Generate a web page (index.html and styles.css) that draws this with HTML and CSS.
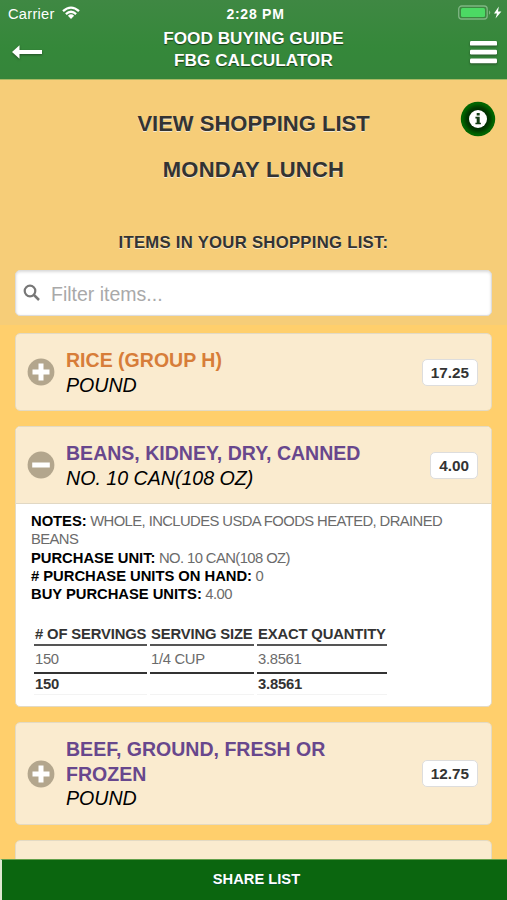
FILE: index.html
```html
<!DOCTYPE html>
<html lang="en">
<head>
<meta charset="utf-8">
<title>FBG Calculator</title>
<link rel="stylesheet" href="styles.css">
</head>
<body>
<div class="app">
  <header class="header">
    <div class="status">
      <div class="carrier"><span class="carrier-name">Carrier</span>
        <svg class="wifi" width="18" height="14" viewBox="0 0 18 14"><g fill="none" stroke="#fff" stroke-width="2.3"><path d="M1 5.2Q9-2 17 5.2"/><path d="M3.9 8.1Q9 3.4 14.1 8.1"/></g><path d="M5.9 9.7Q9 7 12.1 9.7L9 13z" fill="#fff"/></svg>
      </div>
      <span class="clock">2:28 PM</span>
      <svg class="battery" width="49" height="16" viewBox="0 0 49 16"><rect x="3.7" y="1" width="28.5" height="13" rx="3" fill="none" stroke="#7fb583" stroke-width="1.3"/><rect x="6" y="3" width="24" height="9" rx="1.5" fill="#4cd964"/><path d="M34 5.2q2.6 2.3 0 4.6z" fill="#7fb583"/><path d="M43.8 1.5L39 8.4h3l-1.5 5.2L46.4 6.4H43z" fill="#fff"/></svg>
    </div>
    <div class="nav">
      <svg class="back" width="34" height="20" viewBox="0 0 34 20"><path d="M1 9L8.5 2.3V7H31V11H8.5V15.7z" fill="#fff"/></svg>
      <h1 class="title">FOOD BUYING GUIDE<br>FBG CALCULATOR</h1>
      <svg class="menu" width="29" height="26" viewBox="0 0 29 26"><g fill="#fff"><rect x="1" y="1" width="27" height="4.6" rx="1.2"/><rect x="1" y="9.8" width="27" height="4.6" rx="1.2"/><rect x="1" y="18.6" width="27" height="4.6" rx="1.2"/></g></svg>
    </div>
  </header>
  <main class="content">
    <section class="intro">
      <h2 class="heading">VIEW SHOPPING LIST</h2>
      <svg class="info" width="36" height="36" viewBox="0 0 36 36"><defs><radialGradient id="ring"><stop offset=".5" stop-color="#002c00"/><stop offset=".68" stop-color="#003c00"/><stop offset=".9" stop-color="#006400"/></radialGradient></defs><circle cx="18" cy="18" r="17.2" fill="url(#ring)"/><circle cx="18" cy="18" r="9" fill="#fff"/><path d="M16.7 12h3v2.5h-3zM15.4 15.8h4.3v5.9h1.2v1.6h-5.5v-1.6h1.3v-4.2h-1.3z" fill="#123c12"/></svg>
      <h2 class="heading meal">MONDAY LUNCH</h2>
      <h3 class="subheading">ITEMS IN YOUR SHOPPING LIST:</h3>
      <div class="filter">
        <svg width="18" height="18" viewBox="0 0 18 18"><circle cx="7" cy="7" r="5.3" fill="none" stroke="#777" stroke-width="2.2"/><path d="M11 11l5 5" stroke="#777" stroke-width="2.5"/></svg>
        <span class="placeholder">Filter items...</span>
      </div>
    </section>
    <section class="list">
      <article class="card">
        <div class="row">
          <svg class="toggle" width="28" height="28" viewBox="0 0 28 28"><circle cx="14" cy="14" r="13.4" fill="#b3a68d"/><path d="M11.5 5.5h5v6h6v5h-6v6h-5v-6h-6v-5h6z" fill="#fff"/></svg>
          <div class="item"><div class="name orange">RICE (GROUP H)</div><div class="unit">POUND</div></div>
          <span class="count">17.25</span>
        </div>
      </article>
      <article class="card">
        <div class="row open">
          <svg class="toggle" width="28" height="28" viewBox="0 0 28 28"><circle cx="14" cy="14" r="13.4" fill="#b3a68d"/><path d="M5.2 11.5h17.6v5H5.2z" fill="#fff"/></svg>
          <div class="item"><div class="name">BEANS, KIDNEY, DRY, CANNED</div><div class="unit">NO. 10 CAN(108 OZ)</div></div>
          <span class="count">4.00</span>
        </div>
        <div class="details">
          <p><b>NOTES:</b> WHOLE, INCLUDES USDA FOODS HEATED, DRAINED<br>BEANS</p>
          <p><b>PURCHASE UNIT:</b> NO. 10 CAN(108 OZ)</p>
          <p><b># PURCHASE UNITS ON HAND:</b> 0</p>
          <p><b>BUY PURCHASE UNITS:</b> 4.00</p>
          <table class="servings">
            <thead><tr><th># OF SERVINGS</th><th>SERVING SIZE</th><th>EXACT QUANTITY</th></tr></thead>
            <tbody><tr><td>150</td><td>1/4 CUP</td><td>3.8561</td></tr></tbody>
            <tfoot><tr><td>150</td><td></td><td>3.8561</td></tr></tfoot>
          </table>
        </div>
      </article>
      <article class="card">
        <div class="row tall">
          <svg class="toggle" width="28" height="28" viewBox="0 0 28 28"><circle cx="14" cy="14" r="13.4" fill="#b3a68d"/><path d="M11.5 5.5h5v6h6v5h-6v6h-5v-6h-6v-5h6z" fill="#fff"/></svg>
          <div class="item"><div class="name">BEEF, GROUND, FRESH OR<br>FROZEN</div><div class="unit">POUND</div></div>
          <span class="count">12.75</span>
        </div>
      </article>
      <article class="card"><div class="row"></div></article>
    </section>
  </main>
  <footer class="share">SHARE LIST</footer>
</div>
</body>
</html>
```
FILE: styles.css
```css
* { box-sizing: border-box; }
body { margin: 0; font-family: "Liberation Sans", Arial, sans-serif; color: #333; }
h1, h2, h3, p { margin: 0; }
svg { display: block; flex: none; }
.app { height: 900px; display: flex; flex-direction: column; overflow: hidden; background: #ffcf6c; }

.header { flex: none; height: 80px; background: linear-gradient(#3f8843, #35883a 60%, #35853a); border-bottom: 1px solid #a9b963; color: #fff; }
.status { height: 27px; display: grid; grid-template-columns: 1fr auto 1fr; align-items: center; padding: 0 3px 0 8px; font-size: 14.7px; }
.carrier { display: flex; align-items: center; gap: 7px; letter-spacing: .25px; }
.wifi { margin-top: -1px; }
.clock { margin-right: 1px; font-weight: bold; font-size: 14px; letter-spacing: .75px; }
.battery { justify-self: end; margin-top: -1px; }
.nav { display: grid; grid-template-columns: 1fr auto 1fr; align-items: start; padding: 0 9px 0 11px; }
.title { font-size: 17.2px; line-height: 22px; text-align: center; text-shadow: 0 1px 1px #163b18; margin-left: -2px; }
.back { margin-top: 16px; filter: drop-shadow(0 1px 1px #234f26); }
.menu { justify-self: end; margin-top: 13px; filter: drop-shadow(0 1px 1px #234f26); }

.content { flex: 1; min-height: 0; overflow: hidden; }
.intro { position: relative; height: 245px; padding: 21px 15px 0; background: #f6cd78; }
.heading { font-size: 22px; line-height: 46px; text-align: center; text-shadow: 0 1px 0 #f3ead4; }
.meal { letter-spacing: .25px; }
.subheading { margin-top: 39px; font-size: 16.7px; line-height: 22px; letter-spacing: .28px; text-align: center; text-shadow: 0 1px 0 #f3ead4; }
.intro .info { position: absolute; top: 21px; right: 11px; }
.filter { display: flex; align-items: center; gap: 10px; height: 46px; margin-top: 16px; padding-left: 7px; border: 1px solid #ddd; border-radius: 5px; background: #fff; box-shadow: inset 0 1px 3px rgba(0, 0, 0, .15); }
.placeholder { padding-top: 2px; font-size: 19.5px; color: #a9a9a9; }

.list { display: flex; flex-direction: column; gap: 15px; padding: 8px 15px 0; }
.card { flex: none; border: 1px solid #e3dac4; border-radius: 5px; background: #fff; overflow: hidden; }
.row { display: flex; align-items: center; height: 76px; padding: 0 13px 0 11px; background: #faebcf; }
.row.open { height: 77px; border-bottom: 1px solid #e1d8c4; }
.row.tall { height: 101px; }
.item { flex: 1; margin-left: 11px; padding-top: 1px; font-size: 19.6px; line-height: 24.5px; }
.name { font-size: 19.55px; font-weight: bold; color: #68478d; }
.orange { color: #d77d39; }
.unit { font-style: italic; color: #000; }
.count { height: 27px; padding: 0 8px; border: 1px solid #ddd; border-radius: 5px; background: #fff; font-size: 15.3px; font-weight: bold; line-height: 26px; color: #333; }

.details { height: 202px; padding: 8px 15px 0; font-size: 14.8px; line-height: 18.3px; color: #6b6b6b; letter-spacing: -.58px; }
.details b { color: #000; letter-spacing: -.04px; }
.servings { table-layout: fixed; width: 359px; margin-top: 20px; border-spacing: 3px 0; }
.servings th, .servings td { padding: 0 1px; text-align: left; white-space: nowrap; }
.servings th { height: 23px; border-bottom: 2px solid #555; color: #333; letter-spacing: -.15px; }
.servings th:nth-child(1) { width: 113px; }
.servings th:nth-child(2) { width: 104px; }
.servings tbody td { height: 28px; border-bottom: 2px solid #333; letter-spacing: -.3px; }
.servings tfoot td { height: 21px; border-bottom: 1px solid #f3f3f3; font-weight: bold; color: #333; letter-spacing: -.2px; }

.share { flex: none; height: 41px; border-top: 1px solid #62a04b; border-left: 2px solid #dfe8d0; background: #0b660f; color: #fff; font-size: 14.7px; font-weight: bold; line-height: 38px; text-align: center; text-shadow: 0 1px 0 #053; padding-left: 4px; }
```
